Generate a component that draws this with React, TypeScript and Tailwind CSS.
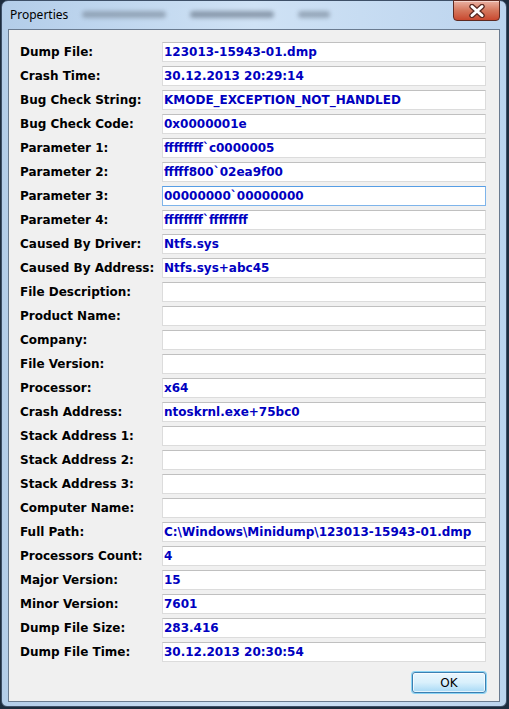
import React from "react";

const rows: [string, string][] = [
  ["Dump File:", "123013-15943-01.dmp"],
  ["Crash Time:", "30.12.2013 20:29:14"],
  ["Bug Check String:", "KMODE_EXCEPTION_NOT_HANDLED"],
  ["Bug Check Code:", "0x0000001e"],
  ["Parameter 1:", "ffffffff`c0000005"],
  ["Parameter 2:", "fffff800`02ea9f00"],
  ["Parameter 3:", "00000000`00000000"],
  ["Parameter 4:", "ffffffff`ffffffff"],
  ["Caused By Driver:", "Ntfs.sys"],
  ["Caused By Address:", "Ntfs.sys+abc45"],
  ["File Description:", ""],
  ["Product Name:", ""],
  ["Company:", ""],
  ["File Version:", ""],
  ["Processor:", "x64"],
  ["Crash Address:", "ntoskrnl.exe+75bc0"],
  ["Stack Address 1:", ""],
  ["Stack Address 2:", ""],
  ["Stack Address 3:", ""],
  ["Computer Name:", ""],
  ["Full Path:", "C:\\Windows\\Minidump\\123013-15943-01.dmp"],
  ["Processors Count:", "4"],
  ["Major Version:", "15"],
  ["Minor Version:", "7601"],
  ["Dump File Size:", "283.416"],
  ["Dump File Time:", "30.12.2013 20:30:54"],
];

export default function App() {
  return (
    <div className="w-[509px] h-[709px] bg-[#1d2c3e] overflow-hidden">
      <div className="ml-[1px] w-[506px] h-[707px] rounded-t-[7px] rounded-b-[6px] border border-[#3e5068] bg-gradient-to-r from-[#b3cde9] via-[#cfe2f5] to-[#bcd4ee] flex flex-col px-[6px] pb-[4px]">
        {/* Title bar */}
        <div className="h-[28px] flex items-start relative">
          <div className="pt-[6px] pl-[2px] text-[12px] leading-[16px] text-black" style={{ fontFamily: '"Noto Sans", "Open Sans", sans-serif' }}>
            Properties
          </div>
          <div className="ml-[14px] mt-[10px] flex gap-[24px] opacity-70">
            <div className="w-[84px] h-[7px] rounded-full bg-[#8090a2] blur-[2px]" />
            <div className="w-[84px] h-[7px] rounded-full bg-[#6f7e90] blur-[2px]" />
            <div className="w-[32px] h-[7px] rounded-full bg-[#8090a2] blur-[2px]" />
          </div>
          <div className="absolute right-[0px] top-[-1px] w-[47px] h-[21px] rounded-b-[4px] border border-[#5e2a22] bg-gradient-to-b from-[#eab2a4] via-[#d4765c] to-[#c8472e] flex items-center justify-center shadow-[inset_0_1px_0_rgba(255,255,255,0.45)]">
            <svg width="18" height="14" viewBox="0 0 18 14">
              <path d="M4 2.5 L14 11.5 M14 2.5 L4 11.5" stroke="#5a2a22" strokeWidth="5.5" strokeLinecap="round" />
              <path d="M4 2.5 L14 11.5 M14 2.5 L4 11.5" stroke="#ffffff" strokeWidth="3" strokeLinecap="round" />
            </svg>
          </div>
        </div>
        {/* Client area */}
        <div className="flex-1 border border-[#6a7b90] bg-[#f0f0f0] flex flex-col pl-[11px] pr-[13px] pt-[12px]">
          <div className="grid grid-cols-[142px_1fr] gap-y-[4px]">
            {rows.map(([label, value], i) => (
              <React.Fragment key={label}>
                <div
                  className="h-[20px] flex items-center text-[12px] font-bold text-black whitespace-nowrap"
                  style={{ fontFamily: '"DejaVu Sans", Verdana, sans-serif' }}
                >
                  {label}
                </div>
                <div
                  className={
                    i === 6
                      ? "h-[20px] flex items-center bg-white border border-[#7eb4ea] border-t-[#569de5] pl-[1px] text-[12px] font-bold text-[#0000c0] whitespace-nowrap overflow-hidden"
                      : "h-[20px] flex items-center bg-white border border-[#dcdcdc] border-t-[#c0c0c0] pl-[1px] text-[12px] font-bold text-[#0000c0] whitespace-nowrap overflow-hidden"
                  }
                  style={{ fontFamily: '"DejaVu Sans", Verdana, sans-serif' }}
                >
                  {value}
                </div>
              </React.Fragment>
            ))}
          </div>
          <div className="flex justify-end mt-[10px]">
            <button
              className="w-[74px] h-[21px] rounded-[3px] border border-[#3c7fb1] bg-gradient-to-b from-[#eaf6fd] via-[#d9f0fc] to-[#a7d9f5] shadow-[0_0_0_1px_#8ad4f5,inset_0_0_0_1px_rgba(255,255,255,0.7)] text-[12px] text-black flex items-center justify-center"
              style={{ fontFamily: '"DejaVu Sans", Verdana, sans-serif' }}
            >
              OK
            </button>
          </div>
        </div>
      </div>
    </div>
  );
}
